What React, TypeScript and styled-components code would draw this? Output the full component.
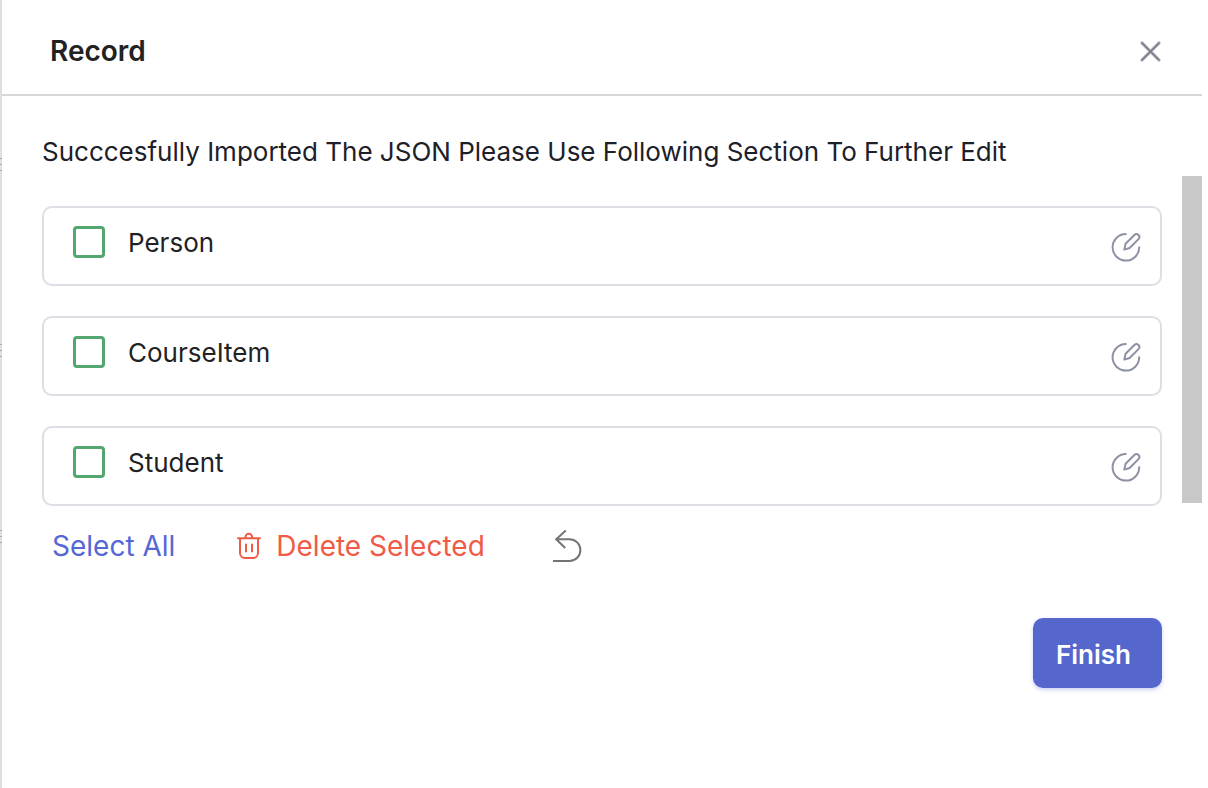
import React, { useState } from "react";
import styled, { createGlobalStyle } from "styled-components";

const GlobalStyle = createGlobalStyle`
  * { box-sizing: border-box; }
  body {
    margin: 0;
    background: #ffffff;
    color: #1d2028;
    font-family: Inter, "Liberation Sans", sans-serif;
  }
  button, input { font: inherit; }
`;

const Page = styled.div`
  display: flex;
  min-height: 100vh;
`;

const CanvasEdge = styled.div`
  display: flex;
  flex-direction: column;
  flex: none;
  width: 2px;
  padding-top: 158px;
  gap: 173px;
  background: #dedee7;
`;

const Grip = styled.span`
  height: 13px;
  border: solid #a9a9b3;
  border-width: 1px 0;
  background: linear-gradient(#a9a9b3, #a9a9b3) 0 5px / 100% 1px no-repeat;
`;

const Panel = styled.main`
  flex: 1;
  min-width: 0;
  margin-right: 6px;
`;

const Header = styled.header`
  display: flex;
  align-items: center;
  justify-content: space-between;
  height: 96px;
  padding: 8px 40px 0 48px;
  border-bottom: 2px solid #d8d8d8;
`;

const Title = styled.h1`
  margin: 0;
  color: #222222;
  font-size: 28px;
  font-weight: 600;
  line-height: 36px;
`;

const IconButton = styled.button`
  display: flex;
  padding: 0;
  border: 0;
  background: none;
  color: #8d91a3;
  cursor: pointer;
`;

const Message = styled.p`
  margin: 0;
  padding: 38px 40px 6px;
  font-size: 26px;
  line-height: 36px;
`;

const ScrollRegion = styled.section`
  display: flex;
  align-items: flex-start;
`;

const List = styled.ul`
  display: flex;
  flex: 1;
  flex-direction: column;
  gap: 30px;
  margin: 0;
  padding: 30px 20px 0 40px;
  list-style: none;
`;

const Thumb = styled.div`
  width: 20px;
  height: 327px;
  background: #c8c8c8;
`;

const Row = styled.li`
  display: flex;
  align-items: flex-start;
  justify-content: space-between;
  height: 80px;
  padding: 18px 19px 0 29px;
  border: 2px solid #dedee7;
  border-radius: 10px;
`;

const RowLabel = styled.label`
  display: flex;
  align-items: flex-start;
  gap: 23px;
  color: #222222;
  font-size: 26px;
  line-height: 34px;
`;

const Checkbox = styled.input`
  appearance: none;
  width: 32px;
  height: 32px;
  margin: 0;
  border: 3px solid #54a671;
  border-radius: 4px;
  &:checked { background: #54a671; }
`;

const EditButton = styled(IconButton)`
  padding-top: 6px;
`;

const Actions = styled.div`
  display: flex;
  align-items: center;
  gap: 61px;
  height: 80px;
  padding: 0 50px;
`;

const TextButton = styled.button<{ $tone: string }>`
  display: flex;
  align-items: center;
  gap: 14px;
  padding: 0;
  border: 0;
  background: none;
  color: ${(p) => p.$tone};
  font-size: 28px;
  line-height: 36px;
  white-space: nowrap;
  cursor: pointer;
`;

const UndoButton = styled(IconButton)`
  padding-left: 6px;
`;

const Footer = styled.footer`
  display: flex;
  justify-content: flex-end;
  padding: 32px 40px;
`;

const Primary = styled.button`
  height: 70px;
  padding: 2px 31px 0 23px;
  border: 0;
  border-radius: 10px;
  background: #5567cd;
  box-shadow: 0 2px 4px rgba(85, 103, 213, 0.3);
  color: #ffffff;
  font-size: 26px;
  font-weight: 600;
  cursor: pointer;
`;

const CloseIcon = () => (
  <svg width="24" height="24" viewBox="0 0 24 24" fill="none" strokeLinecap="round">
    <path d="M4 4 21 21M21 4 4 21" stroke="#c3c4d0" strokeWidth="3.6" />
    <path d="M4 4 21 21M21 4 4 21" stroke="#77777f" strokeWidth="1.7" />
  </svg>
);

const EditIcon = () => (
  <svg width="30" height="30" viewBox="0 0 30 30" fill="none" stroke="#8d91a3" strokeWidth="2" strokeLinecap="round" strokeLinejoin="round">
    <path d="M14.8 2A13.3 13.3 0 1 0 28.2 15.3" />
    <path d="M13.3 17.6 14.6 11.8 23.4 3A2.9 2.9 0 0 1 27.5 7.1L18.6 16Z" />
  </svg>
);

const TrashIcon = () => (
  <svg width="26" height="28" viewBox="0 0 26 28" fill="none" stroke="currentColor" strokeWidth="2" strokeLinecap="round">
    <path d="M2 6.2H24M4 6.5V21A5 5 0 0 0 9 26H17A5 5 0 0 0 22 21V6.5" />
    <path d="M9.5 6V5A3.3 3.3 0 0 1 16.1 5V6M10 12.6V19.6M16 12.6V19.6" />
  </svg>
);

const UndoIcon = () => (
  <svg width="30" height="34" viewBox="0 0 30 34" fill="none" stroke="#747474" strokeWidth="2">
    <path d="M13.8 1.5 4.2 10.2 13.2 19M4.5 10.2H17.5A10.9 10.9 0 0 1 17.5 32H1" />
  </svg>
);

const records = ["Person", "CourseItem", "Student"];

export default function App() {
  const [selected, setSelected] = useState<string[]>([]);
  const toggle = (name: string) =>
    setSelected((s) => (s.includes(name) ? s.filter((n) => n !== name) : [...s, name]));

  return (
    <>
      <GlobalStyle />
      <Page>
        <CanvasEdge>
          <Grip />
          <Grip />
          <Grip />
        </CanvasEdge>
        <Panel>
          <Header>
            <Title>Record</Title>
            <IconButton aria-label="Close"><CloseIcon /></IconButton>
          </Header>
          <Message>Succcesfully Imported The JSON Please Use Following Section To Further Edit</Message>
          <ScrollRegion>
            <List>
              {records.map((name) => (
                <Row key={name}>
                  <RowLabel>
                    <Checkbox type="checkbox" checked={selected.includes(name)} onChange={() => toggle(name)} />
                    {name}
                  </RowLabel>
                  <EditButton aria-label={`Edit ${name}`}><EditIcon /></EditButton>
                </Row>
              ))}
            </List>
            <Thumb />
          </ScrollRegion>
          <Actions>
            <TextButton $tone="#5567d5" onClick={() => setSelected(records)}>Select All</TextButton>
            <TextButton $tone="#ef5b46"><TrashIcon />Delete Selected</TextButton>
            <UndoButton aria-label="Undo"><UndoIcon /></UndoButton>
          </Actions>
          <Footer>
            <Primary>Finish</Primary>
          </Footer>
        </Panel>
      </Page>
    </>
  );
}
